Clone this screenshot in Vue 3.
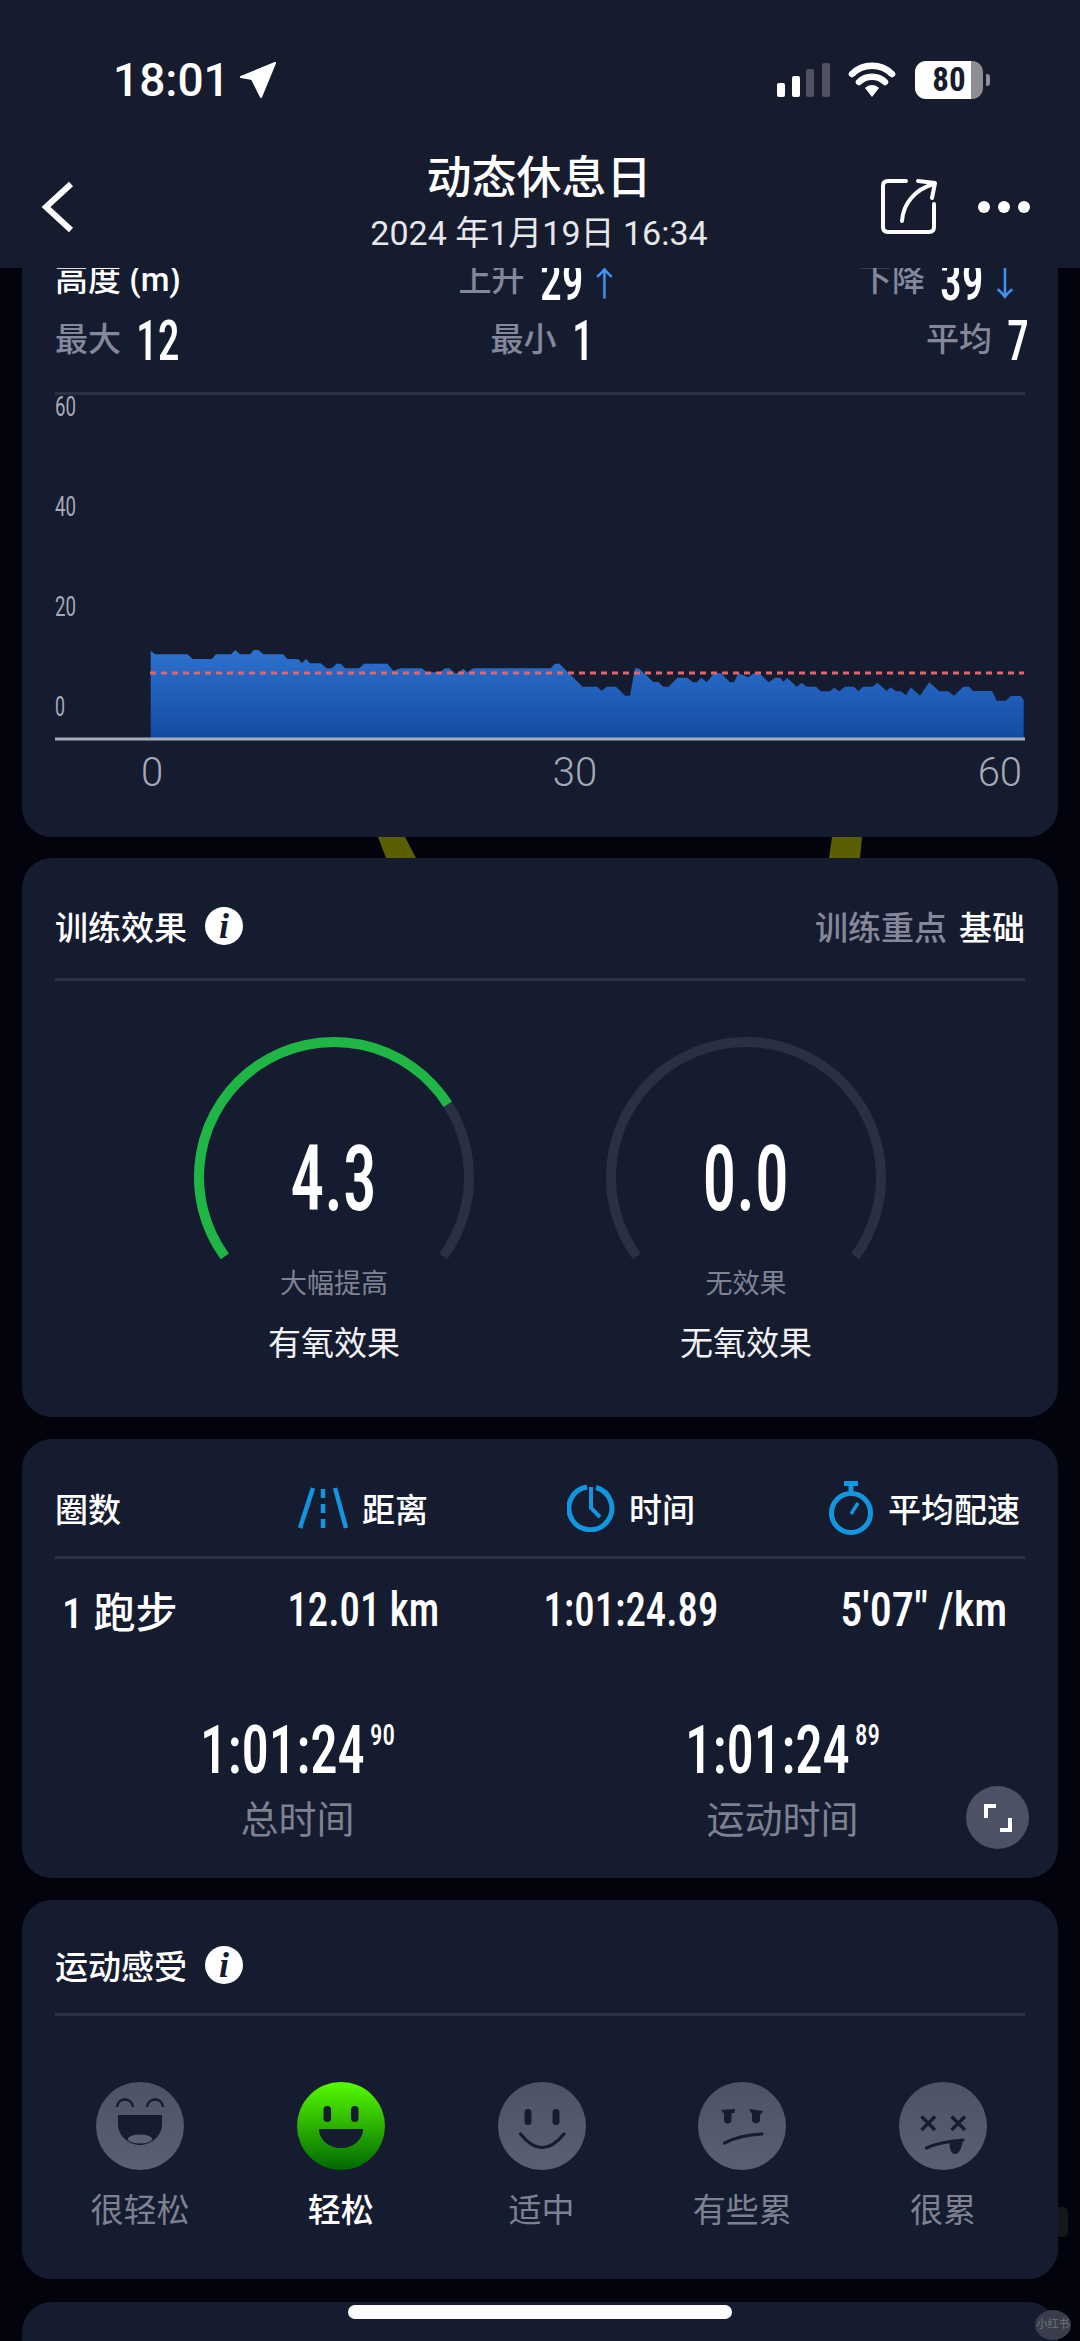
<template>
  <div class="page">
    <header class="top">
      <div class="status">
        <div class="clock-wrap">
          <span class="clock-time">18:01</span>
          <svg width="37" height="36" viewBox="0 0 37 36"><path d="M35 1 L1 15 L12 17 L21 35 Z" fill="#fff" stroke="#fff" stroke-width="2" stroke-linejoin="round" /></svg>
        </div>
        <div class="status-right">
          <svg width="54" height="34" viewBox="0 0 54 34">
            <rect x="0" y="20" width="8" height="14" rx="2" fill="#fff" />
            <rect x="15" y="13" width="8" height="21" rx="2" fill="#fff" />
            <rect x="29" y="6" width="8" height="28" rx="2" fill="#50535f" />
            <rect x="45" y="0" width="8" height="34" rx="2" fill="#50535f" />
          </svg>
          <svg width="48" height="36" viewBox="0 0 48 36">
            <path d="M4 12 C15 1 33 1 44 12" fill="none" stroke="#fff" stroke-width="6.5" stroke-linecap="round" />
            <path d="M11 20 C18 13 30 13 37 20" fill="none" stroke="#fff" stroke-width="6.5" stroke-linecap="round" />
            <path d="M17 26 C21 22 27 22 31 26 L24 35 Z" fill="#fff" />
          </svg>
          <div class="battery"><span>80</span></div>
          <i class="battery-nub"></i>
        </div>
      </div>
      <div class="nav">
        <svg class="back" width="40" height="56" viewBox="0 0 40 56"><polyline points="31,5 6,28 31,51" fill="none" stroke="#fff" stroke-width="6" /></svg>
        <div class="nav-title">
          <div class="title">动态休息日</div>
          <div class="date">2024 年1月19日 16:34</div>
        </div>
        <div class="nav-actions">
          <svg width="60" height="60" viewBox="0 0 60 60" fill="none" stroke="#fff" stroke-width="4" stroke-linecap="round" stroke-linejoin="round">
            <path d="M26 4 H8 Q3 4 3 9 V50 Q3 55 8 55 H49 Q54 55 54 50 V27" />
            <path d="M22 44 C23 27 35 12 54 7" />
            <path d="M38 4 L55 6 L52 21" />
          </svg>
          <svg width="52" height="14" viewBox="0 0 52 14" fill="#fff"><circle cx="6" cy="7" r="6" /><circle cx="26" cy="7" r="6" /><circle cx="46" cy="7" r="6" /></svg>
        </div>
      </div>
    </header>

    <section class="card card-alt">
      <div class="stat-row">
        <div class="stat"><span class="stat-white">高度 (m)</span></div>
        <div class="stat"><span class="muted">上升</span><b class="num n2">29</b><span class="arrow">↑</span></div>
        <div class="stat stat-end"><span class="muted">下降</span><b class="num n2">39</b><span class="arrow">↓</span></div>
      </div>
      <div class="stat-row">
        <div class="stat"><span class="muted">最大</span><b class="num n2">12</b></div>
        <div class="stat"><span class="muted">最小</span><b class="num n1">1</b></div>
        <div class="stat"><span class="muted">平均</span><b class="num n1">7</b></div>
      </div>
      <div class="line"></div>
      <svg class="chart" width="970" height="395" viewBox="55 395 970 395">
        <defs>
          <linearGradient id="altFill" x1="0" y1="0" x2="0" y2="1">
            <stop offset="0" stop-color="#2d72cf" />
            <stop offset="1" stop-color="#134ba3" />
          </linearGradient>
        </defs>
        <text v-for="t in yTicks" :key="t.label" class="y-tick" x="55" :y="t.y" :textLength="t.w" lengthAdjust="spacingAndGlyphs">{{ t.label }}</text>
        <polygon :points="altPoints" fill="url(#altFill)" />
        <line x1="150" y1="673" x2="1024" y2="673" stroke="#e2646c" stroke-width="3" stroke-dasharray="6 5" />
        <line x1="55" y1="739" x2="1025" y2="739" stroke="#a9adb9" stroke-width="3" />
        <text class="x-tick" x="152" y="786" text-anchor="middle">0</text>
        <text class="x-tick" x="575" y="786" text-anchor="middle">30</text>
        <text class="x-tick" x="1022" y="786" text-anchor="end">60</text>
      </svg>
    </section>

    <svg class="gap" width="1080" height="21" viewBox="0 0 1080 21">
      <polygon points="378,0 405,0 416,21 386,21" fill="#5b5e03" />
      <polygon points="832,0 862,0 860,21 829,21" fill="#5b5e03" />
    </svg>

    <section class="card card-effect">
      <div class="card-head">
        <div class="head-left"><span>训练效果</span><span class="info">i</span></div>
        <div class="head-right"><span class="muted">训练重点</span><span class="focus">基础</span></div>
      </div>
      <div class="line"></div>
      <div class="gauges">
        <div v-for="g in gauges" :key="g.name" class="gauge">
          <svg width="290" height="230" viewBox="0 0 290 230" fill="none" stroke-width="10">
            <path :d="arc(144, 396)" stroke="#2a2f44" />
            <path v-if="g.end" :d="arc(144, g.end)" stroke="#1fb645" />
          </svg>
          <div class="gauge-value">{{ g.value }}</div>
          <div class="gauge-sub">{{ g.sub }}</div>
          <div class="gauge-name">{{ g.name }}</div>
        </div>
      </div>
    </section>

    <section class="card card-laps">
      <div class="lap-grid lap-head">
        <div class="cell-left">圈数</div>
        <div class="cell">
          <svg width="50" height="42" viewBox="0 0 50 42" fill="none" stroke="#1296e0" stroke-width="4.5">
            <path d="M15 1 L2 41" /><path d="M37 1 L48 41" />
            <path d="M25 2 V41" stroke-dasharray="9 6" />
          </svg>
          <span>距离</span>
        </div>
        <div class="cell">
          <svg width="48" height="48" viewBox="0 0 48 48" fill="none" stroke="#1296e0" stroke-width="5">
            <path d="M29 3.5 A21.5 21.5 0 1 1 20 3" />
            <path d="M24 3 V24 L33 33" stroke-width="4" />
          </svg>
          <span>时间</span>
        </div>
        <div class="cell">
          <svg width="46" height="54" viewBox="0 0 46 54" fill="none" stroke="#1296e0" stroke-width="5">
            <path d="M16 2.5 H30" stroke-width="5" /><path d="M23 4 V12" />
            <circle cx="23" cy="32" r="19.5" />
            <path d="M23 33 L30 22" stroke-width="3.5" />
          </svg>
          <span>平均配速</span>
        </div>
      </div>
      <div class="line"></div>
      <div class="lap-grid lap-row">
        <div class="cell-left lap-name"><span class="lap-no">1</span> 跑步</div>
        <div class="lap-val"><span class="num">12.01 km</span></div>
        <div class="lap-val"><span class="num">1:01:24.89</span></div>
        <div class="lap-val"><span class="num pace">5'07" /km</span></div>
      </div>
      <div class="totals">
        <div v-for="t in totals" :key="t.label" class="total">
          <div class="total-time"><span class="num">1:01:24</span><sup class="num">{{ t.hund }}</sup></div>
          <div class="total-label">{{ t.label }}</div>
        </div>
      </div>
      <button class="expand">
        <svg width="28" height="28" viewBox="0 0 28 28" fill="none" stroke="#fff" stroke-width="4"><path d="M2 14 V2 H12" /><path d="M26 14 V26 H16" /></svg>
      </button>
    </section>

    <section class="card card-feel">
      <div class="card-head">
        <div class="head-left"><span>运动感受</span><span class="info">i</span></div>
      </div>
      <div class="line"></div>
      <div class="faces">
        <div class="face">
          <svg width="88" height="88" viewBox="0 0 88 88">
            <circle cx="44" cy="44" r="44" fill="url(#greyFace)" />
            <defs>
              <linearGradient id="greyFace" x1="0" y1="0" x2="0" y2="1"><stop offset="0" stop-color="#4e5265" /><stop offset="1" stop-color="#5b5f73" /></linearGradient>
              <linearGradient id="greenFace" x1="0" y1="0" x2="0" y2="1"><stop offset="0" stop-color="#56fb02" /><stop offset="1" stop-color="#016800" /></linearGradient>
            </defs>
            <path d="M21 25 C22 15 36 15 37 25 M51 25 C52 15 66 15 67 25" fill="none" stroke="#161c30" stroke-width="2.5" />
            <path d="M22 33 H66 V42 C66 54 55 63 44 63 C33 63 22 54 22 42 Z" fill="#161c30" />
            <ellipse cx="44" cy="57" rx="12" ry="4.5" fill="#5b5f73" />
          </svg>
          <span>很轻松</span>
        </div>
        <div class="face active">
          <svg width="88" height="88" viewBox="0 0 88 88">
            <circle cx="44" cy="44" r="44" fill="url(#greenFace)" />
            <rect x="26.5" y="24" width="7.5" height="16" rx="3.7" fill="#161c30" />
            <rect x="54" y="24" width="7.5" height="16" rx="3.7" fill="#161c30" />
            <path d="M22 47 H66 C66 58 56 66 44 66 C32 66 22 58 22 47 Z" fill="#161c30" />
          </svg>
          <span>轻松</span>
        </div>
        <div class="face">
          <svg width="88" height="88" viewBox="0 0 88 88">
            <circle cx="44" cy="44" r="44" fill="url(#greyFace)" />
            <rect x="26.5" y="27" width="7" height="16" rx="3.5" fill="#161c30" />
            <rect x="54.5" y="27" width="7" height="16" rx="3.5" fill="#161c30" />
            <path d="M22.5 52 Q44 79 66 52" fill="none" stroke="#161c30" stroke-width="3.2" stroke-linecap="round" />
          </svg>
          <span>适中</span>
        </div>
        <div class="face">
          <svg width="88" height="88" viewBox="0 0 88 88">
            <circle cx="44" cy="44" r="44" fill="url(#greyFace)" />
            <path d="M23 28 L37 27 L36.5 31 L33.5 31 V39 A4 4 0 0 1 26 39 L26 32 Z" fill="#161c30" />
            <path d="M51 27 L65 29 L62 33 V39 A4.5 4.5 0 0 1 54 39 V32 Z" fill="#161c30" />
            <path d="M26.5 61 Q42 53 64 52" fill="none" stroke="#161c30" stroke-width="3.2" stroke-linecap="round" />
          </svg>
          <span>有些累</span>
        </div>
        <div class="face">
          <svg width="88" height="88" viewBox="0 0 88 88">
            <circle cx="44" cy="44" r="44" fill="url(#greyFace)" />
            <path d="M22.5 34.5 L36 48 M36 34.5 L22.5 48 M52.5 34.5 L66 48 M66 34.5 L52.5 48" stroke="#161c30" stroke-width="3.2" fill="none" />
            <path d="M27.5 66 Q40 60 64 58" fill="none" stroke="#161c30" stroke-width="3.2" stroke-linecap="round" />
            <path d="M51 60 L64 57 C63 66 60 72 56 72 C52 72 50 66 51 60 Z" fill="#161c30" />
          </svg>
          <span>很累</span>
        </div>
      </div>
    </section>

    <section class="card card-next"></section>

    <div class="home-bar"></div>
    <div class="scroll-hint"></div>
    <div class="watermark">小红书</div>
  </div>
</template>

<script setup>
// traced from the reference: crop pixels at 3x, offset below when they become page coords
const left = [[62,355],[62,92],[75,103],[172,103],[188,117],[245,117],[258,103],[303,103],[316,90],[330,103],[360,103],[372,90],[385,90],[400,103],[460,103],[472,117],[505,118],[516,129],[528,117],[540,130],[572,130],[590,145],[605,145],[620,131],[632,131],[645,145],[688,145],[702,131],[772,131],[790,152],[812,145],[876,145],[890,157],[930,157],[945,145],[958,145],[975,160],[985,158],[1000,146],[1012,157],[1030,145],[1262,145],[1275,131],[1288,131],[1358,200],[1402,200],[1415,213],[1430,200],[1458,200],[1485,227],[1500,227]]
const right = [[315,145],[328,146],[370,186],[385,186],[400,200],[416,200],[442,173],[472,173],[488,187],[500,187],[514,173],[530,187],[552,160],[572,160],[600,187],[612,187],[625,160],[655,172],[672,160],[688,160],[716,187],[735,173],[750,173],[760,185],[772,174],[800,200],[815,188],[830,200],[858,200],[872,214],[900,214],[912,203],[928,214],[945,200],[972,200],[985,214],[1000,200],[1028,200],[1042,188],[1070,213],[1082,202],[1098,214],[1112,214],[1128,226],[1142,202],[1170,227],[1198,187],[1228,214],[1255,214],[1272,227],[1300,200],[1318,200],[1328,213],[1386,213],[1400,242],[1428,242],[1442,228],[1472,228],[1481,240],[1481,355]]

const altPoints = [
  ...left.map(([x, y]) => `${(130 + x / 3).toFixed(1)},${(620 + y / 3).toFixed(1)}`),
  ...right.map(([x, y]) => `${(530 + x / 3).toFixed(1)},${(620 + y / 3).toFixed(1)}`),
].join(' ')

const yTicks = [
  { label: '60', y: 416, w: 21 },
  { label: '40', y: 516, w: 21 },
  { label: '20', y: 616, w: 21 },
  { label: '0', y: 716, w: 10 },
]

const gauges = [
  { value: '4.3', sub: '大幅提高', name: '有氧效果', end: 327.4 },
  { value: '0.0', sub: '无效果', name: '无氧效果', end: 0 },
]

const totals = [
  { hund: '90', label: '总时间' },
  { hund: '89', label: '运动时间' },
]

function arc(from, to) {
  const r = 135, cx = 145, cy = 145
  const pt = (a) => {
    const rad = (a * Math.PI) / 180
    return `${(cx + r * Math.cos(rad)).toFixed(2)} ${(cy + r * Math.sin(rad)).toFixed(2)}`
  }
  return `M${pt(from)} A${r} ${r} 0 ${to - from > 180 ? 1 : 0} 1 ${pt(to)}`
}
</script>

<style>
html, body { background: #02030c; }
</style>

<style scoped>
.page {
  position: relative;
  width: 1080px;
  height: 2341px;
  overflow: hidden;
  background: #02030c;
  color: #fff;
  font-family: Roboto, "Noto Sans CJK SC", sans-serif;
}
.top {
  position: relative;
  z-index: 2;
  height: 268px;
  background: #161c2e;
}
.status {
  display: flex;
  justify-content: space-between;
  align-items: center;
  height: 50px;
  padding: 55px 90px 0 113px;
}
.clock-wrap { display: flex; align-items: center; gap: 10px; }
.clock-time { font-size: 46px; font-weight: 500; line-height: 50px; }
.status-right { display: flex; align-items: center; }
.status-right svg:nth-child(2) { margin: 0 19px 0 17px; }
.battery {
  width: 68px;
  height: 38px;
  border-radius: 11px;
  background: linear-gradient(90deg, #fff 82%, #8d8e93 82%);
  color: #161c2e;
  font-size: 33px;
  font-weight: 700;
  font-stretch: 75%;
  line-height: 38px;
  text-align: center;
}
.battery-nub { width: 4px; height: 12px; margin-left: 3px; border-radius: 0 3px 3px 0; background: #8d8e93; }
.nav {
  display: grid;
  grid-template-columns: 1fr auto 1fr;
  align-items: center;
  margin-top: 46px;
  padding: 0 50px 0 48px;
}
.back { display: block; margin: 10px 0 0 -8px; }
.nav-title { text-align: center; }
.title { font-size: 45px; font-weight: 500; line-height: 56px; }
.date { margin-top: 6px; font-size: 34px; line-height: 40px; color: #e6e7ea; }
.nav-actions { display: flex; align-items: center; justify-content: flex-end; gap: 38px; margin-top: 10px; }

.card {
  position: relative;
  margin: 0 22px;
  padding: 0 33px;
  border-radius: 30px;
  background: #161c30;
}
.card-alt { margin-top: -53px; padding-top: 36px; height: 622px; box-sizing: border-box; }
.line { height: 3px; background: #2c3144; }
.muted { color: #85889a; }
.num {
  display: inline-block;
  font-stretch: 75%;
  font-family: Roboto, sans-serif;
  font-weight: 500;
  transform: scaleX(.85);
}

.stat-row { display: grid; grid-template-columns: 1fr auto 1fr; height: 60px; align-items: center; }
.stat { display: flex; align-items: center; gap: 15px; font-size: 33px; font-weight: 500; }
.stat:last-child { justify-content: flex-end; }
.stat-end { padding-right: 3px; }
.stat > span:first-child { padding-bottom: 8px; }
.stat-white { color: #fff; }
.stat .num { font-size: 56px; line-height: 60px; transform: scaleX(.78); transform-origin: left; }
.n2 { width: 42px; }
.n1 { width: 18px; }
.arrow { margin-left: -9px; color: #3f95f0; font-size: 34px; font-weight: 400; }
.stat-row + .line { margin-top: 21px; }
.chart { display: block; }
.y-tick { fill: #a7aab6; font-size: 27px; }
.x-tick { fill: #a7aab6; font-size: 40px; font-weight: 300; }

.gap { display: block; }
.card-effect { height: 559px; box-sizing: border-box; }
.card-head {
  display: flex;
  justify-content: space-between;
  align-items: center;
  box-sizing: border-box;
  height: 120px;
  padding-top: 16px;
  font-size: 33px;
  font-weight: 500;
}
.focus { margin-left: 12px; }
.head-left { display: flex; align-items: center; gap: 18px; }
.info {
  width: 38px;
  height: 38px;
  border-radius: 50%;
  background: #fff;
  color: #161c30;
  font-family: "Liberation Serif", serif;
  font-size: 36px;
  font-style: italic;
  font-weight: 700;
  line-height: 38px;
  text-align: center;
}
.gauges { display: flex; justify-content: center; padding-top: 51px; }
.gauge { position: relative; width: 412px; display: flex; flex-direction: column; align-items: center; }
.gauge svg { display: block; }
.gauge-value {
  position: absolute;
  top: 93px;
  font-size: 90px;
  font-stretch: 75%;
  font-weight: 500;
  line-height: 110px;
  transform: scaleX(.75);
}
.gauge-sub { margin-top: 4px; font-size: 27px; line-height: 36px; color: #7f8292; }
.gauge-name { margin-top: 20px; font-size: 33px; line-height: 44px; color: #f2f2f4; }

.card-laps { margin-top: 22px; height: 439px; box-sizing: border-box; }
.lap-grid { display: grid; grid-template-columns: 232px 152px 384px 202px; align-items: center; }
.lap-head { padding-top: 20px; height: 97px; font-size: 33px; font-weight: 500; }
.cell { display: flex; align-items: center; justify-content: center; gap: 14px; white-space: nowrap; }
.lap-row { height: 100px; font-size: 48px; }
.lap-val { display: flex; justify-content: center; white-space: nowrap; }
.lap-name { padding-left: 7px; font-size: 42px; font-weight: 500; }
.lap-no { font-stretch: 75%; }
.pace { transform: scaleX(.92); }
.totals { display: grid; grid-template-columns: 1fr 1fr; margin-top: 52px; }
.total { text-align: center; }
.total-time { font-size: 66px; line-height: 80px; white-space: nowrap; transform: scaleX(.83); }
.total-time .num { transform: none; }
.total-time sup { margin-left: 6px; font-size: 30px; line-height: 0; vertical-align: 28px; }
.total-label { margin-top: 4px; font-size: 38px; line-height: 50px; color: #7e8190; }
.expand {
  position: absolute;
  right: 29px;
  bottom: 29px;
  width: 63px;
  height: 63px;
  padding: 0;
  display: flex;
  align-items: center;
  justify-content: center;
  border: 0;
  border-radius: 50%;
  background: #4d5164;
}

.card-feel { margin-top: 22px; height: 379px; box-sizing: border-box; }
.card-feel .card-head { height: 113px; }
.faces { display: flex; justify-content: space-between; padding: 66px 0 0; margin: 0 12px 0 15px; }
.face { width: 140px; display: flex; flex-direction: column; align-items: center; gap: 21px; font-size: 33px; line-height: 40px; color: #7e8190; }
.face svg { display: block; }
.face.active { color: #fff; font-weight: 500; }

.card-next { margin-top: 23px; height: 80px; }
.home-bar {
  position: absolute;
  left: 348px;
  top: 2305px;
  width: 384px;
  height: 14px;
  border-radius: 7px;
  background: #fff;
}
.scroll-hint {
  position: absolute;
  left: 1058px;
  top: 2207px;
  width: 10px;
  height: 30px;
  border-radius: 0 5px 5px 0;
  background: #16171b;
}
.watermark {
  position: absolute;
  left: 1035px;
  top: 2310px;
  width: 36px;
  height: 30px;
  border-radius: 50%;
  background: #3a3e4c;
  color: #70747f;
  font-size: 11px;
  line-height: 30px;
  text-align: center;
  white-space: nowrap;
}
</style>
